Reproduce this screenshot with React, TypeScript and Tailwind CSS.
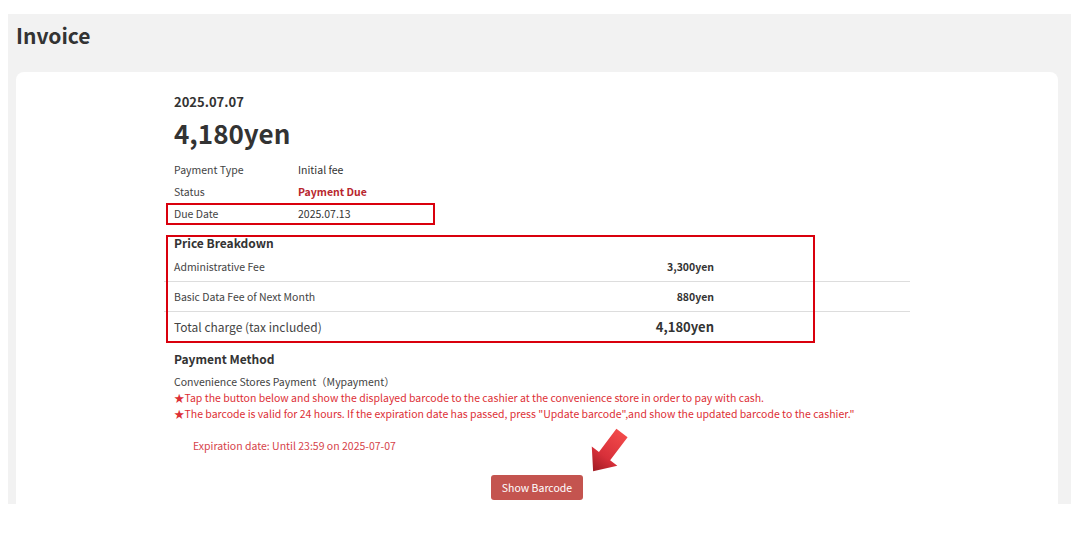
import { useState } from "react";

type Fee = {
  label: string;
  amount: string;
};

const fees: Fee[] = [
  { label: "Administrative Fee", amount: "3,300yen" },
  { label: "Basic Data Fee of Next Month", amount: "880yen" },
];

const font = { fontFamily: '"Noto Sans CJK JP", "Noto Sans", sans-serif' };

const Arrow = () => (
  <svg
    width="60"
    height="60"
    viewBox="0 0 60 60"
    className="absolute left-[554px] top-[349px] pointer-events-none"
  >
    <defs>
      <linearGradient id="arrowGrad" x1="0" y1="0" x2="0" y2="1">
        <stop offset="0" stopColor="#f24a4a" />
        <stop offset="0.6" stopColor="#d8303a" />
        <stop offset="1" stopColor="#9e1a22" />
      </linearGradient>
    </defs>
    <g transform="translate(52 12) rotate(37)">
      <polygon
        points="-7,0 7,0 7,29 16,29 0,48 -16,29 -7,29"
        fill="url(#arrowGrad)"
      />
    </g>
  </svg>
);

const App = () => {
  const [showBarcode, setShowBarcode] = useState(false);

  return (
    <div className="w-[1087px] h-[536px] bg-white text-[#333]" style={font}>
      <div className="ml-2 mr-4 mt-[14px] h-[490px] bg-[#f2f2f2] pl-2 pr-[13px] overflow-hidden">
        <h1 className="pt-[6px] pb-[1px] text-[21px] leading-[30px] font-bold text-[#333]">
          Invoice
        </h1>

        <div className="relative mt-[21px] h-[432px] rounded-t-lg bg-white">
          <div className="ml-[158px] w-[736px] pt-5">
            <div className="text-[13px] leading-5 font-bold">2025.07.07</div>
            <div className="mt-[3px] text-[26px] leading-9 font-bold">4,180yen</div>

            <div className="mt-2 text-[10.5px]">
              <div className="flex h-[22px] items-center">
                <span className="w-[124px] text-[#444]">Payment Type</span>
                <span>Initial fee</span>
              </div>
              <div className="flex h-[22px] items-center">
                <span className="w-[124px] text-[#444]">Status</span>
                <span className="font-bold text-[#b8262d]">Payment Due</span>
              </div>
              <div className="-ml-2 flex h-[22px] w-[269px] items-center border-2 border-[#d9000d] pl-[6px]">
                <span className="w-[124px] text-[#444]">Due Date</span>
                <span>2025.07.13</span>
              </div>
            </div>

            <div className="relative mt-[9px]">
              <h2 className="text-[12px] leading-[18px] font-bold">Price Breakdown</h2>
              {fees.map((f) => (
                <div
                  key={f.label}
                  className="-ml-[10px] flex h-[30px] items-center justify-between border-b border-[#ddd] pl-[10px] pr-[196px] text-[10.5px]"
                >
                  <span className="text-[#444]">{f.label}</span>
                  <span className="font-bold">{f.amount}</span>
                </div>
              ))}
              <div className="-ml-[10px] flex h-[30px] items-center justify-between pl-[10px] pr-[196px]">
                <span className="text-[12px] text-[#444]">Total charge (tax included)</span>
                <span className="text-[13px] font-bold">4,180yen</span>
              </div>
              <div className="pointer-events-none absolute -left-2 top-[1px] h-[108px] w-[649px] border-2 border-[#d9000d]" />
            </div>

            <h2 className="mt-2 text-[12px] leading-[18px] font-bold">Payment Method</h2>
            <div className="mt-[6px] text-[10.5px] leading-4">
              <p className="text-[#444]">Convenience Stores Payment（Mypayment）</p>
              <p className="text-[#dd2f36]">
                ★Tap the button below and show the displayed barcode to the cashier at the convenience store in order to pay with cash.
              </p>
              <p className="text-[#dd2f36]">
                ★The barcode is valid for 24 hours. If the expiration date has passed, press "Update barcode",and show the updated barcode to the cashier."
              </p>
              <p className="mt-4 pl-[19px] text-[#d6434a]">
                Expiration date: Until 23:59 on 2025-07-07
              </p>
            </div>
          </div>

          <div className="mt-[21px] flex justify-center">
            <button
              onClick={() => setShowBarcode(!showBarcode)}
              className="h-[25px] w-[92px] rounded-[3px] bg-[#c4544f] text-[10.5px] text-white"
            >
              Show Barcode
            </button>
          </div>

          <Arrow />
        </div>
      </div>
    </div>
  );
};

export default App;
